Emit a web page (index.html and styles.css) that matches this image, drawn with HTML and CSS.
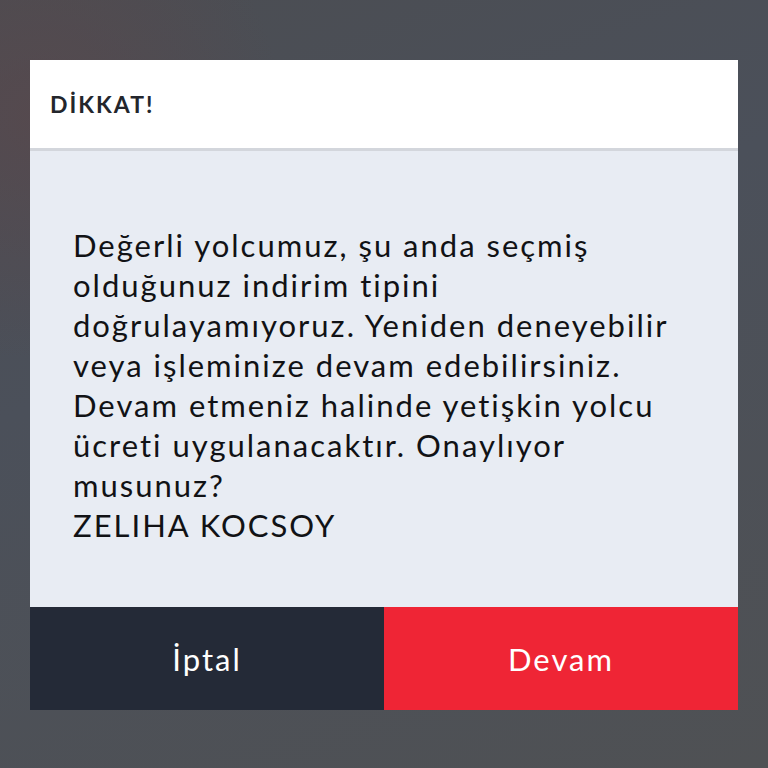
FILE: index.html
```
<!DOCTYPE html>
<html lang="tr">
<head>
<meta charset="utf-8">
<link rel="stylesheet" href="styles.css">
</head>
<body>
<div class="backdrop">
  <div class="dialog">
    <div class="header">DİKKAT!</div>
    <div class="body">
      <p class="message">Değerli yolcumuz, şu anda seçmiş<br>olduğunuz indirim tipini<br>doğrulayamıyoruz. Yeniden deneyebilir<br>veya işleminize devam edebilirsiniz.<br>Devam etmeniz halinde yetişkin yolcu<br>ücreti uygulanacaktır. Onaylıyor<br>musunuz?<br>ZELIHA KOCSOY</p>
    </div>
    <div class="actions">
      <div class="btn btn-cancel">İptal</div>
      <div class="btn btn-ok">Devam</div>
    </div>
  </div>
</div>
</body>
</html>
```
FILE: styles.css
```
html, body {
  margin: 0;
  padding: 0;
}
body {
  width: 768px;
  height: 768px;
  overflow: hidden;
  font-family: Lato, "Noto Sans", sans-serif;
}
.backdrop {
  width: 768px;
  height: 768px;
  box-sizing: border-box;
  padding: 60px 30px 0 30px;
  background: radial-gradient(circle at 5% 15%, rgba(92,70,74,0.6) 0%, rgba(92,70,74,0) 25%),
              linear-gradient(160deg, #4b4d52 0%, #4b505a 40%, #4f5154 100%);
}
.dialog {
  width: 708px;
  display: flex;
  flex-direction: column;
}
.header {
  height: 88px;
  background: #ffffff;
  border-bottom: 3px solid #d3d6dc;
  display: flex;
  align-items: center;
  padding-left: 20px;
  font-size: 23px;
  font-weight: 700;
  color: #23262c;
  letter-spacing: 2px;
}
.body {
  height: 456px;
  background: #e8ecf3;
  box-sizing: border-box;
  padding: 74px 20px 0 43px;
}
.message {
  margin: 0;
  font-size: 31px;
  line-height: 40px;
  color: #111215;
  letter-spacing: 2px;
  white-space: nowrap;
}
.actions {
  display: flex;
  height: 103px;
}
.btn {
  flex: 1;
  display: flex;
  align-items: center;
  justify-content: center;
  color: #ffffff;
  font-size: 31px;
  letter-spacing: 2px;
}
.btn-cancel {
  background: #242a37;
}
.btn-ok {
  background: #ef2535;
}
```
